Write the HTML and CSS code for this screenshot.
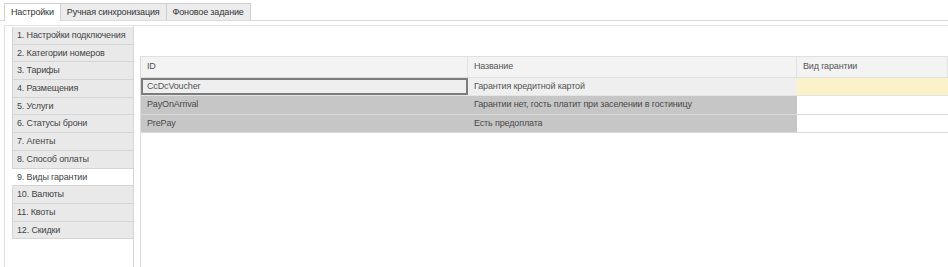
FILE: index.html
```html
<!DOCTYPE html>
<html>
	<head>
		<meta charset="UTF-8">
		<title>Настройки</title>
		<link rel="stylesheet" href="styles.css">
	</head>
	<body>
		<div class="tabs">
			<div class="tab active">Настройки</div>
			<div class="tab">Ручная синхронизация</div>
			<div class="tab">Фоновое задание</div>
		</div>
		<div class="panel">
			<ul class="menu">
				<li>1. Настройки подключения</li>
				<li>2. Категории номеров</li>
				<li>3. Тарифы</li>
				<li>4. Размещения</li>
				<li>5. Услуги</li>
				<li>6. Статусы брони</li>
				<li>7. Агенты</li>
				<li>8. Способ оплаты</li>
				<li class="current">9. Виды гарантии</li>
				<li>10. Валюты</li>
				<li>11. Квоты</li>
				<li>12. Скидки</li>
			</ul>
			<div class="main">
				<div class="grid">
					<div class="row head">
						<div class="cell c-id">ID</div>
						<div class="cell c-name">Название</div>
						<div class="cell c-kind">Вид гарантии</div>
					</div>
					<div class="row first">
						<div class="cell c-id focus">CcDcVoucher</div>
						<div class="cell c-name">Гарантия кредитной картой</div>
						<div class="cell c-kind edit"></div>
					</div>
					<div class="row sel">
						<div class="cell c-id">PayOnArrival</div>
						<div class="cell c-name">Гарантии нет, гость платит при заселении в гостиницу</div>
						<div class="cell c-kind"></div>
					</div>
					<div class="row sel">
						<div class="cell c-id">PrePay</div>
						<div class="cell c-name">Есть предоплата</div>
						<div class="cell c-kind"></div>
					</div>
				</div>
			</div>
		</div>
	</body>
</html>
```
FILE: styles.css
```css
html, body { margin: 0; padding: 0; height: 100%; background: #fff; }
body { font-family: "Liberation Sans", Arial, sans-serif; font-size: 9px; letter-spacing: -0.15px; color: #333; overflow: hidden; }

/* tabs */
.tabs { display: flex; padding: 3px 0 0 4px; border-bottom: 1px solid #dcdcdc; height: 17px; }
.tab { height: 16px; line-height: 16px; padding: 0 6px; border: 1px solid #cfcfcf; border-bottom: none; background: #ececec; margin-right: -1px; }
.tab.active { background: #fff; height: 17px; position: relative; z-index: 1; }

.panel { display: flex; margin: 4px 0 0 4px; border-top: 1px solid #e2e2e2; height: 242px; }

/* left menu */
.menu { list-style: none; margin: 0; padding: 1px 0 0 7px; width: 121px; flex: none; border-left: 1px solid #dedede; border-right: 1px solid #d6d6d6; }
.menu li { height: 16.7px; line-height: 17px; padding-left: 4px; background: #e9e9e9; border: 1px solid #d4d4d4; border-top: none; border-right: none; color: #444; white-space: nowrap; }
.menu li.current { background: #fff; border-left-color: #fff; }

/* grid */
.main { flex: 1; padding: 30px 0 0 6px; }
.grid { border-left: 1px solid #dcdcdc; border-top: 1px solid #e0e0e0; height: 100%; }
.row { display: flex; height: 17.5px; border-bottom: 1px solid #e4e4e4; }
.row.head { height: 19.5px; background: #f3f3f3; border-bottom: 1px solid #e0e0e0; }
.cell { box-sizing: border-box; line-height: 17.5px; padding-left: 6px; color: #555; white-space: nowrap; }
.head .cell { line-height: 19.5px; border-right: 1px solid #e2e2e2; }
.c-id { width: 327px; }
.c-name { width: 329px; }
.c-kind { flex: 1; }
.first .c-id, .first .c-name { background: #efefef; }
.cell.focus { border: 2px solid #7c7c7c; line-height: 13.5px; padding-left: 4px; }
.cell.edit { background: #fcf2c9; }
.sel .c-id, .sel .c-name { background: #c6c6c6; color: #4a4a4a; }
.sel { border-bottom-color: #d9d9d9; }
```
